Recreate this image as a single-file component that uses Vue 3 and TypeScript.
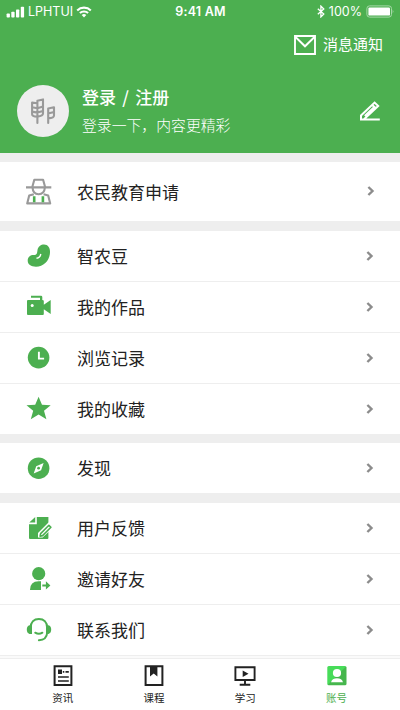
<script setup lang="ts">
interface Item {
  icon: string
  label: string
}

const groups: Item[][] = [
  [{ icon: 'farmer', label: '农民教育申请' }],
  [
    { icon: 'bean', label: '智农豆' },
    { icon: 'camera', label: '我的作品' },
    { icon: 'clock', label: '浏览记录' },
    { icon: 'star', label: '我的收藏' },
  ],
  [{ icon: 'compass', label: '发现' }],
  [
    { icon: 'feedback', label: '用户反馈' },
    { icon: 'invite', label: '邀请好友' },
    { icon: 'headset', label: '联系我们' },
  ],
]

const tabs: Item[] = [
  { icon: 'news', label: '资讯' },
  { icon: 'course', label: '课程' },
  { icon: 'study', label: '学习' },
  { icon: 'account', label: '账号' },
]
</script>

<template>
  <div class="screen">
    <header class="header">
      <div class="status">
        <div class="carrier">
          <svg class="signal" width="19" height="12" viewBox="0 0 19 12" fill="#fff">
            <rect x="0.6" y="7.5" width="3.3" height="4" rx="0.8" />
            <rect x="5.3" y="5.8" width="3.3" height="5.7" rx="0.8" />
            <rect x="10" y="3.5" width="3.3" height="8" rx="0.8" />
            <rect x="14.8" y="0.7" width="3.3" height="10.8" rx="0.8" />
          </svg>
          <span>LPHTUI</span>
          <svg width="16" height="12" viewBox="0 0 16 12" fill="none" stroke="#fff" stroke-width="2.1">
            <path d="M1.2 4.4a9.7 9.7 0 0 1 13.6 0M3.9 7.1a5.9 5.9 0 0 1 8.2 0" />
            <path d="M5.7 9.1a3.4 3.4 0 0 1 4.6 0L8 11.4z" fill="#fff" stroke="none" />
          </svg>
        </div>
        <div class="time">9:41 AM</div>
        <div class="power">
          <svg width="8" height="13" viewBox="0 0 8 13" fill="none" stroke="#fff" stroke-width="1.3">
            <path d="M0.8 3.7l6 5.3L3.9 11.9V1.1L6.8 4l-6 5.3" />
          </svg>
          <span>100%</span>
          <svg class="battery" width="29" height="13" viewBox="0 0 29 13">
            <rect x="0.9" y="0.9" width="24.6" height="11.2" rx="2.6" fill="none" stroke="#a6d8a8" />
            <rect x="2.4" y="2.4" width="21.6" height="8.2" rx="1.2" fill="#fff" />
            <path d="M26.7 4.6q1.6 1.9 0 3.8z" fill="#a6d8a8" />
          </svg>
        </div>
      </div>
      <div class="notice">
        <svg width="22" height="20" viewBox="0 0 22 20" fill="none" stroke="#fff" stroke-width="1.9">
          <path d="M1 1h20v18H1zM1.5 2L11 11.3 20.5 2" />
        </svg>
        <span>消息通知</span>
      </div>
      <div class="profile">
        <div class="avatar">
          <svg width="26" height="28" viewBox="0 0 26 28" fill="none" stroke="#999" stroke-width="2.1" stroke-linejoin="round" stroke-linecap="round">
            <path d="M7.4 26V3.8L13 2.4v14.2q0 2.6-5.6 3M7.4 6.2L2.1 5.6v11.6q0 2.4 5.3 2.4M2.1 10.2l5.3 1 5.6-1.6M2.1 14.6l5.3 1 5.6-1.6" />
            <path d="M18.2 26V11.6l5.8-1.4v8.4q0 2.6-5.8 2.8M18.2 16.400l5.8-1.400" />
          </svg>
        </div>
        <div class="who">
          <div class="login">登录 / 注册</div>
          <div class="hint">登录一下，内容更精彩</div>
        </div>
        <svg class="edit" width="22" height="22" viewBox="0 0 22 22" fill="none" stroke="#fff" stroke-width="2">
          <path d="M20.8 19.4H2v-4L15.6 2.600l3.600 3.400L5 19.200M5.800 16L14.800 7.600M13.200 4.900l3.700 3.400" />
        </svg>
      </div>
    </header>

    <main>
      <section v-for="(group, g) in groups" :key="g" class="group">
        <div v-for="item in group" :key="item.icon" class="row">
          <svg class="icon" width="30" height="30" viewBox="0 0 30 30">
            <g v-if="item.icon === 'farmer'" fill="none" stroke="#999" stroke-width="2.1" stroke-linejoin="round">
              <path d="M2 11.4h25.3M8.3 11l2-7.2h8.800l2 7.200M8.600 12q.3 6 6 6.200 5.800-.2 6.200-6.200" />
              <path d="M9.800 18.300L5.200 19.600 3.200 27.400h23L24.200 19.600l-4.600-1.300" />
              <path d="M10.200 20.300v6M18.900 20.300v6" stroke="#4caf50" stroke-width="2.6" />
            </g>
            <g v-else-if="item.icon === 'bean'">
              <path d="M13.500 9C14 5.500 17 3.500 20 3.500c4 0 6 3.200 6 7.500 0 8-6 14.700-14 14.700-5 0-8.300-2.200-8.300-6.200 0-3.500 2.600-5.500 6-5.500 3.300 0 3.500-2 3.800-5z" fill="#4caf50" />
              <path d="M12.500 17.200q3.600-.4 4.300-4.200" fill="none" stroke="#fff" stroke-width="1.4" />
            </g>
            <g v-else-if="item.icon === 'camera'" fill="#4caf50">
              <path d="M4 8h12V5.700H7V3.700h10q1.300 0 1.300 1.300V8q1.500 0 1.500 1v3.700L26.700 8v14l-6.900-4.700V22q0 1-1 1H4q-1 0-1-1V9q0-1 1-1z" />
              <circle cx="8.200" cy="13.400" r="1.500" fill="#fff" />
            </g>
            <g v-else-if="item.icon === 'clock'">
              <circle cx="14.600" cy="14.600" r="10.800" fill="#4caf50" />
              <path d="M14.900 8.800v6.800h5.200" fill="none" stroke="#fff" stroke-width="1.900" />
            </g>
            <path v-else-if="item.icon === 'star'" d="M14.600 2.800l3.400 7.900 8.700.5-6.700 5.600 2.400 8.500-7.800-4.700-7.800 4.700 2.400-8.500-6.700-5.600 8.700-.5z" fill="#4caf50" />
            <g v-else-if="item.icon === 'compass'">
              <circle cx="14.600" cy="15.200" r="10.800" fill="#4caf50" />
              <path d="M19.600 10l-2.500 7.200-7.400 3.200 2.500-7.200z" fill="#fff" />
              <circle cx="14.600" cy="15.200" r="1.400" fill="#4caf50" />
            </g>
            <g v-else-if="item.icon === 'feedback'">
              <path d="M12.800 4H24.400V25q0 1-1 1H6q-1 0-1-1V11.200h7.800zM5.300 9.600L11.200 4v5.600z" fill="#4caf50" />
              <path d="M24.500 9.500L14 20v4.600h4.600L27 16.500v-7z" fill="#fff" />
              <path d="M24.900 12.300l-8.300 8.300-.5 2.500 2.500-.5 8.300-8.300z" fill="#fff" stroke="#4caf50" stroke-width="1.600" stroke-linejoin="round" />
            </g>
            <g v-else-if="item.icon === 'invite'" fill="#4caf50">
              <circle cx="14.700" cy="9.700" r="6.600" />
              <path d="M6 26q0-8.700 8.700-8.700h2.300V26z" />
              <path d="M18.300 20.500h3.600V17.200l4.500 4.200-4.500 4.200v-3.200h-3.600z" />
            </g>
            <g v-else-if="item.icon === 'headset'" fill="none" stroke="#4caf50">
              <path d="M6.700 12.500C6.700 7 10 4 14.900 4s8.200 3 8.200 8.500" stroke-width="2" />
              <path d="M8 10.300v8.600H5.500q-2.700-.7-2.700-4.300t2.700-4.300zM22 10.300v8.600h2.500q2.700-.7 2.700-4.300t-2.700-4.300z" fill="#4caf50" stroke="none" />
              <path d="M23.200 17.500q-.5 7.500-8.300 7.800M11.200 17.700q3.700 2.300 7.200 0" stroke-width="2" stroke-linecap="round" />
            </g>
          </svg>
          <span class="label">{{ item.label }}</span>
          <svg class="chevron" width="8" height="10" viewBox="0 0 8 10" fill="none" stroke="#8c8c8c" stroke-width="2.4">
            <path d="M1.400 1L5.500 5 1.400 9" />
          </svg>
        </div>
      </section>
    </main>

    <nav class="tabs">
      <div v-for="tab in tabs" :key="tab.icon" class="tab" :class="{ active: tab.icon === 'account' }">
        <svg width="24" height="24" viewBox="0 0 24 24">
          <g v-if="tab.icon === 'news'" fill="none" stroke="#222" stroke-width="2">
            <path d="M3.600 2.300h16.800v18.800H3.600z" />
            <path d="M11.800 7.800h1.500M14.500 7.800h3.300M7 13h10.800M7 17h10.800" stroke-width="1.700" />
            <path d="M7 5.500h4V10H7z" fill="#222" stroke="none" />
          </g>
          <g v-else-if="tab.icon === 'course'">
            <path d="M3.600 2.300h16.800v18.800H3.600z" fill="none" stroke="#222" stroke-width="2" />
            <path d="M8 2.500h7.400v10l-3.700-3-3.700 3z" fill="#222" />
          </g>
          <g v-else-if="tab.icon === 'study'">
            <path d="M2.400 3.300h19.200V16H2.400zM12 16v4.700M6.700 20.700h10.600" fill="none" stroke="#222" stroke-width="1.900" />
            <path d="M9.700 6.400l5.800 3.300-5.800 3.300z" fill="#222" />
          </g>
          <g v-else>
            <defs>
              <linearGradient id="tile" x1="0" y1="0" x2="1" y2="1">
                <stop offset="0.480" stop-color="#47dc59" />
                <stop offset="0.520" stop-color="#46b64d" />
              </linearGradient>
            </defs>
            <rect x="2.300" y="2" width="19.200" height="19.200" rx="1.500" fill="url(#tile)" />
            <circle cx="12" cy="9" r="4.100" fill="#fff" />
            <path d="M6 18.200q1-4 6-4t6 4z" fill="#fff" />
          </g>
        </svg>
        <span>{{ tab.label }}</span>
      </div>
    </nav>
  </div>
</template>

<style>
body {
  margin: 0;
}
</style>

<style scoped>
.screen {
  width: 400px;
  height: 710px;
  display: flex;
  flex-direction: column;
  overflow: hidden;
  background: #fafafa;
  color: #222;
  font-family: "Noto Sans CJK SC", sans-serif;
}

svg {
  display: block;
  flex: none;
}

.header {
  box-sizing: border-box;
  height: 153px;
  flex: none;
  background: #4caf50;
  color: #fff;
}

.status {
  display: grid;
  grid-template-columns: 1fr auto 1fr;
  align-items: center;
  height: 23px;
  padding: 0 5px 0 6px;
  font: 12.5px/23px Inter, sans-serif;
}

.carrier,
.power {
  display: flex;
  align-items: center;
}

.carrier {
  gap: 3px;
}

.time {
  font-weight: 600;
  font-size: 12.5px;
  letter-spacing: 0.2px;
}

.power {
  justify-content: flex-end;
  gap: 4px;
}

.notice {
  display: flex;
  justify-content: flex-end;
  align-items: center;
  gap: 7px;
  height: 43px;
  padding: 0 17px 1px 0;
  font-size: 15px;
  line-height: 20px;
}

.notice span {
  padding-bottom: 1px;
}

.profile {
  display: flex;
  align-items: center;
  height: 88px;
  padding: 0 19px 0 17px;
}

.avatar {
  width: 52px;
  height: 52px;
  display: flex;
  align-items: center;
  justify-content: center;
  border-radius: 50%;
  background: #eee;
}

.who {
  flex: 1;
  padding-left: 13px;
}

.login {
  font-size: 17px;
  line-height: 28px;
  font-weight: 500;
  word-spacing: 2.5px;
}

.hint {
  font-size: 14.85px;
  line-height: 28px;
  font-weight: 300;
}

.group {
  border-top: 10px solid #eee;
}

.group:first-child,
.group:nth-child(3) {
  border-top-width: 9px;
}

.row {
  box-sizing: border-box;
  height: 51px;
  display: flex;
  align-items: center;
  padding: 0 26px 0 24px;
  background: #fff;
  border-bottom: 1px solid #eee;
}

.group:not(:last-child) .row:last-child {
  height: 50px;
  border-bottom: 0;
}

.group:first-child .row:last-child {
  height: 59px;
  padding: 0 25px 1px 24px;
}

.label {
  flex: 1;
  padding-left: 23px;
  font-size: 17px;
  line-height: 24px;
}

.group:first-child .label {
  padding-top: 1px;
}

.tabs {
  box-sizing: border-box;
  height: 52px;
  flex: none;
  margin-top: auto;
  display: grid;
  grid-template-columns: repeat(4, 91.3px);
  padding: 5px 17px 0;
  background: #fff;
  border-top: 1px solid #eee;
}

.tab {
  display: flex;
  flex-direction: column;
  align-items: center;
  font-size: 10.5px;
  line-height: 20px;
}

.tab.active {
  color: #4caf50;
}
</style>
